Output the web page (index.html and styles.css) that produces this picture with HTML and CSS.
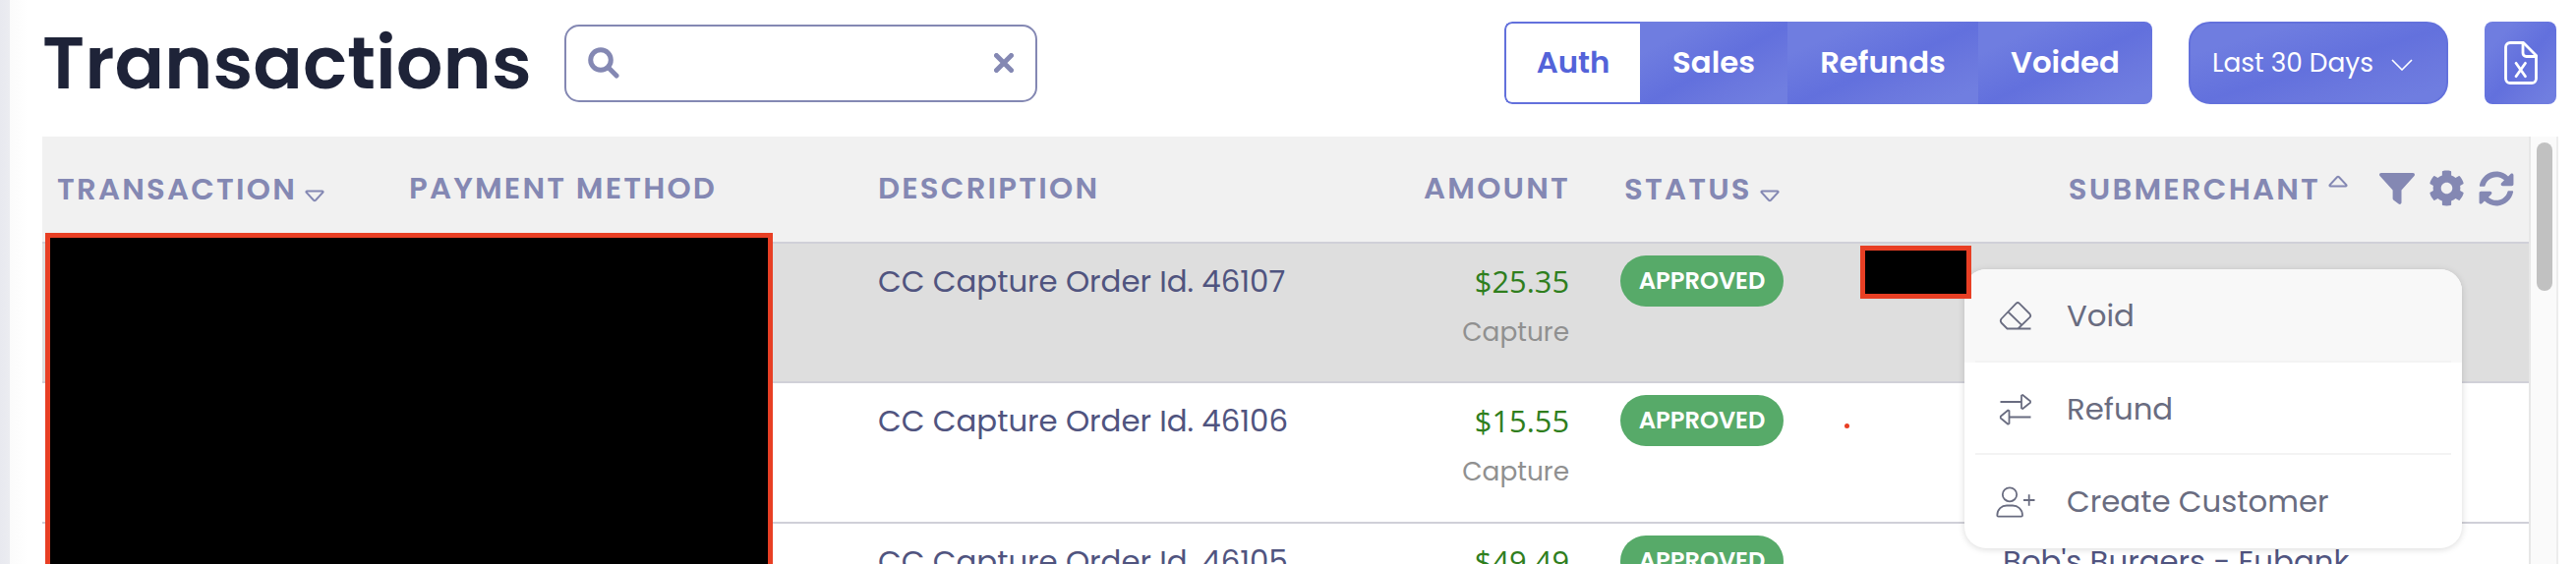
FILE: index.html
```
<!DOCTYPE html>
<html lang="en">
<head>
  <meta charset="UTF-8" />
  <meta name="viewport" content="width=device-width, initial-scale=1.0"/>
  <title>Transactions</title>
  <link rel="stylesheet" href="styles.css">
</head>
<body>

<div class="page">
  <div class="toolbar">
    <h1>Transactions</h1>
    <div class="search">
      <svg class="search-icon" viewBox="0 0 32 32"><circle cx="13" cy="13" r="10.3"/><path d="M20.5 20.5L29 29"/></svg>
      <svg class="clear-icon" viewBox="0 0 20 20"><path d="M2.5 2.5l15 15M17.5 2.5l-15 15"/></svg>
    </div>
    <div class="tabs">
      <button class="tab active">Auth</button>
      <button class="tab sales">Sales</button>
      <button class="tab refunds">Refunds</button>
      <button class="tab voided">Voided</button>
    </div>
    <button class="range-btn">
      <span>Last 30 Days</span>
      <svg viewBox="0 0 22 12"><path d="M1 1l10 10L21 1"/></svg>
    </button>
    <button class="export-btn">
      <svg viewBox="0 0 34 44">
        <path d="M6 1.5h13.5l13 13V38a4.500 4.500 0 0 1-4.500 4.500H6A4.500 4.500 0 0 1 1.500 38V6A4.500 4.500 0 0 1 6 1.500z"/>
        <path d="M19 2v10a3.500 3.500 0 0 0 3.500 3.500h10"/>
        <path d="M12 22.300l9.500 13.400M21.500 22.300L12 35.700"/>
      </svg>
    </button>
  </div>

  <div class="table-wrap">
    <div class="table">
      <div class="row head">
        <div class="cell th sorted">TRANSACTION<svg class="sort down" viewBox="0 0 20 13"><path d="M2.200 1.500h15.600q1.300.3.500 1.500L11 10.800q-1 .9-2 0L1.700 3q-.8-1.200.5-1.500z"/></svg></div>
        <div class="cell th">PAYMENT METHOD</div>
        <div class="cell th desc-col">DESCRIPTION</div>
        <div class="cell th amount-col">AMOUNT</div>
        <div class="cell th sorted status-col">STATUS<svg class="sort down" viewBox="0 0 20 13"><path d="M2.200 1.500h15.600q1.300.3.500 1.500L11 10.800q-1 .9-2 0L1.700 3q-.8-1.200.5-1.500z"/></svg></div>
        <div class="cell th sorted tools">
          SUBMERCHANT
          <svg class="sort up" viewBox="0 0 20 13"><path d="M2.200 11.500h15.600q1.300-.3.500-1.500L11 2.200q-1-.9-2 0L1.700 10q-.8 1.200.5 1.500z"/></svg>
          <svg class="tool filter" viewBox="0 0 36 32"><path d="M1.800 0h32.400c1.600 0 2.300 1.800 1.300 3L22.500 17.500V30c0 1.500-1.500 2.500-2.900 1.500l-5-3.700c-.7-.5-1-1.100-1-1.900v-8.400L.5 3C-.5 1.800.2 0 1.800 0z"/></svg>
          <svg class="tool gear" viewBox="0 0 512 512"><path d="M487.400 315.700l-42.600-24.600c4.300-23.200 4.300-47 0-70.200l42.600-24.600c4.900-2.800 7.100-8.600 5.500-14-11.100-35.600-30-67.800-54.700-94.600-3.800-4.100-10-5.100-14.800-2.300L380.800 110c-17.900-15.400-38.500-27.300-60.800-35.100V25.800c0-5.600-3.900-10.500-9.400-11.700-36.700-8.200-74.300-7.800-109.200 0-5.500 1.200-9.400 6.100-9.400 11.700V75c-22.200 7.900-42.800 19.800-60.800 35.100L88.700 85.500c-4.900-2.800-11-1.900-14.800 2.300-24.700 26.700-43.600 58.900-54.700 94.600-1.700 5.400.6 11.200 5.500 14L67.300 221c-4.300 23.200-4.300 47 0 70.200l-42.600 24.600c-4.900 2.800-7.100 8.600-5.500 14 11.100 35.600 30 67.800 54.700 94.600 3.800 4.100 10 5.100 14.800 2.300l42.600-24.600c17.900 15.400 38.500 27.300 60.800 35.100v49.200c0 5.600 3.900 10.500 9.400 11.700 36.700 8.200 74.300 7.800 109.200 0 5.500-1.200 9.400-6.100 9.400-11.700v-49.200c22.200-7.900 42.800-19.800 60.800-35.100l42.600 24.600c4.900 2.800 11 1.900 14.800-2.300 24.700-26.700 43.600-58.900 54.700-94.600 1.500-5.500-.7-11.300-5.600-14.100zM256 336c-44.100 0-80-35.900-80-80s35.900-80 80-80 80 35.900 80 80-35.900 80-80 80z"/></svg>
          <svg class="tool refresh" viewBox="0 0 512 512"><path d="M370.700 133.300C339.500 104 298.900 88 255.800 88c-77.500.1-144.300 53.200-162.800 126.900-1.300 5.400-6.100 9.200-11.700 9.200H24.100c-7.500 0-13.200-6.800-11.800-14.200C33.900 94.900 134.800 8 256 8c66.400 0 126.800 26.100 171.300 68.700L463 41C478.100 25.900 504 36.600 504 57.900V192c0 13.300-10.700 24-24 24H345.900c-21.400 0-32.100-25.900-17-41l41.800-41.700zM32 296h134.100c21.400 0 32.100 25.900 17 41l-41.800 41.800c31.300 29.300 71.800 45.300 114.900 45.300 77.400-.1 144.300-53.100 162.800-126.800 1.300-5.400 6.100-9.200 11.700-9.200h57.300c7.500 0 13.200 6.800 11.800 14.200C478.100 417.100 377.200 504 256 504c-66.400 0-126.800-26.100-171.300-68.700L49 471c-15.100 15.100-41 4.400-41-16.900V320c0-13.300 10.700-24 24-24z"/></svg>
        </div>
      </div>

      <div class="row selected">
        <div class="cell"></div>
        <div class="cell"></div>
        <div class="cell desc-col desc">CC Capture Order Id. 46107</div>
        <div class="cell amount-col"><div class="amount">$25.35</div><div class="kind">Capture</div></div>
        <div class="cell status-col"><span class="badge">APPROVED</span></div>
        <div class="cell merchant"></div>
      </div>
      <div class="row">
        <div class="cell"></div>
        <div class="cell"></div>
        <div class="cell desc-col desc">CC Capture Order Id. 46106</div>
        <div class="cell amount-col"><div class="amount">$15.55</div><div class="kind">Capture</div></div>
        <div class="cell status-col"><span class="badge">APPROVED</span></div>
        <div class="cell merchant"></div>
      </div>
      <div class="row">
        <div class="cell"></div>
        <div class="cell"></div>
        <div class="cell desc-col desc">CC Capture Order Id. 46105</div>
        <div class="cell amount-col"><div class="amount">$49.49</div></div>
        <div class="cell status-col"><span class="badge">APPROVED</span></div>
        <div class="cell merchant">Bob's Burgers - Eubank</div>
      </div>
    </div>
    <div class="scrollbar"><div class="thumb"></div></div>
  </div>
</div>

<!-- Row menu -->
<div class="menu">
  <div class="menu-item hover">
    <svg viewBox="0 1 40 40"><path d="M11.500 33.500L5.500 27.500q-1.500-2 0-4L20.500 7.800q1.700-1.500 3.400 0L34.500 18.500q1.500 1.700 0 3.400L22.500 33.500M12.500 16.500L26.500 30.200M11 33.500H35.500"/></svg>
    <span>Void</span>
  </div>
  <div class="menu-item">
    <svg viewBox="0 0 40 40"><path d="M4.500 12H26M26 5.500v13l1.200.5L35 12.800v-1.500L27.200 5zM35.500 27.500H13.500M13.500 21v13l-1.200.7L4.800 28.500v-1.800L12.300 20.500z"/></svg>
    <span>Refund</span>
  </div>
  <div class="menu-item">
    <svg viewBox="0 0 40 40"><ellipse cx="14" cy="12.300" rx="7.200" ry="7"/><path d="M1.300 33.500C1.300 27 6 23.500 11 23.500h6c5 0 10 3.500 10 10q0 1.200-1.200 1.200H2.500q-1.200 0-1.200-1.200zM28 18h11.500M33.700 12.200v11.600"/></svg>
    <span>Create Customer</span>
  </div>
</div>

<!-- Redacted areas -->
<div class="redact redact-main"></div>
<div class="redact redact-merchant"></div>
<div class="red-dot"></div>

</body>
</html>
```
FILE: styles.css
```
* {
  box-sizing: border-box;
}

body {
  margin: 0;
  position: relative;
  height: 574px;
  overflow: hidden;
  background: #fff;
  font-family: Poppins, Inter, "Open Sans", sans-serif;
}

button {
  font-family: inherit;
  border: none;
  padding: 0;
  margin: 0;
}

svg {
  display: block;
  flex: none;
}

.page {
  height: 574px;
  padding: 22px 18px 0 43px;
  background: linear-gradient(to right, #e8e9ef 0, #ebecf1 10px, #fbfbfb 10px, #fff 28px);
}

.toolbar {
  display: flex;
  height: 84px;
  align-items: center;
}

h1 {
  width: 531px;
  margin: 0;
  color: #1e2338;
  font-size: 74.8px;
  font-weight: 600;
  line-height: 84px;
  white-space: nowrap;
}

.search {
  width: 481px;
  height: 79px;
  padding: 0 22px;
  display: flex;
  justify-content: space-between;
  align-items: center;
  border: 2px solid #8488b3;
  border-radius: 15px;
}

.search svg {
  fill: none;
  stroke: #8488b3;
  stroke-width: 5;
  stroke-linecap: round;
}

.search-icon {
  width: 32px;
  height: 32px;
}

.clear-icon {
  width: 20px;
  height: 20px;
}

/* Filter tabs */
.tabs {
  display: flex;
  margin-left: auto;
  width: 659px;
  height: 84px;
  border-radius: 8px;
  overflow: hidden;
}

.tab,
.export-btn {
  background: linear-gradient(to bottom right, #6f7de0 0, #6f7de0 20%, #6270dd 52%, #6a77de 70%, #707ee0 90%);
}

.tab {
  width: 150px;
  color: #fff;
  font-size: 30.8px;
  font-weight: 600;
}

.tab.active {
  width: 138px;
  color: #5363d9;
  background: #fff;
  border: 2px solid #6371dc;
  border-right: none;
  border-radius: 8px 0 0 8px;
}

.tab.refunds {
  width: 194px;
}

.tab.voided {
  width: 177px;
}

.range-btn {
  width: 264px;
  height: 84px;
  margin-left: 37px;
  padding-left: 22px;
  display: flex;
  align-items: center;
  gap: 18px;
  color: #fff;
  font-size: 26.4px;
  border: 2px solid #6371dc;
  border-radius: 22px;
  background: linear-gradient(to bottom right, #6f7de0 0, #6f7de0 20%, #6371dd 52%, #6a77de 70%, #6f7de0 90%);
}

.range-btn svg {
  width: 22px;
  height: 12px;
  margin-top: 4px;
  fill: none;
  stroke: #fff;
  stroke-width: 1.6;
}

.export-btn {
  width: 73px;
  height: 84px;
  margin-left: 37px;
  margin-right: 2px;
  display: flex;
  align-items: center;
  justify-content: center;
  border-radius: 8px;
}

.export-btn svg {
  width: 34px;
  height: 44px;
  fill: none;
  stroke: #fff;
  stroke-width: 2.8;
  stroke-linecap: round;
  stroke-linejoin: round;
}

/* Table */
.table-wrap {
  display: flex;
  width: 2559px;
  height: 435px;
  margin-top: 33px;
  overflow: hidden;
}

.table {
  width: 2529px;
}

.row {
  display: grid;
  grid-template-columns: 358px 478px 501px 231px 410px 551px;
  height: 143px;
  border-bottom: 2px solid #d0d0d8;
}

.row.selected {
  height: 142px;
  background: #dedede;
}

.row.head {
  height: 109px;
  background: #f1f1f1;
}

.cell {
  padding: 0 15px;
  white-space: nowrap;
}

.th {
  padding-top: 31px;
  color: #8488b3;
  font-size: 30.8px;
  font-weight: 600;
  line-height: 44px;
  letter-spacing: 2.2px;
}

.th.sorted {
  display: flex;
  padding-top: 32px;
}

.desc-col {
  padding-left: 14px;
}

.amount-col {
  padding-right: 15px;
  text-align: right;
}

.th.amount-col {
  padding-right: 14px;
}

.status-col {
  padding-left: 37px;
}

.th.status-col {
  padding-left: 41px;
}

.sort {
  width: 20px;
  height: 13px;
  margin-left: 8px;
  fill: none;
  stroke: #8488b3;
  stroke-width: 2;
}

.sort.down {
  margin-top: 22px;
}

.sort.up {
  margin-top: 7px;
}

.tools {
  justify-content: flex-end;
}

.tool {
  fill: #8488b3;
}

.filter {
  width: 36px;
  height: 32px;
  margin: 5px 0 0 32px;
}

.gear {
  width: 37px;
  height: 37px;
  margin: 2px 0 0 14px;
}

.refresh {
  width: 36px;
  height: 36px;
  margin: 3px 0 0 14px;
}

.desc,
.merchant {
  padding-top: 17px;
  color: #50547f;
  font-size: 30.8px;
  line-height: 44px;
}

.amount {
  padding-top: 16px;
  color: #2f7e1d;
  font-family: "Open Sans", "Noto Sans", sans-serif;
  font-size: 30.8px;
  line-height: 44px;
}

.kind {
  padding-top: 9px;
  color: #909090;
  font-size: 26.4px;
  line-height: 42px;
}

.badge {
  display: block;
  width: 166px;
  height: 52px;
  margin-top: 12px;
  border-radius: 26px;
  background: #57aa69;
  color: #fff;
  font-size: 24.2px;
  font-weight: 600;
  line-height: 52px;
  text-align: center;
}

.merchant {
  padding-left: 16px;
}

.scrollbar {
  width: 30px;
  padding: 6px 0 0 6px;
  background: #fafafa;
  border-left: 2px solid #e7e7e7;
  border-right: 2px solid #ededed;
}

.thumb {
  width: 16px;
  height: 151px;
  border-radius: 8px;
  background: #c1c1c1;
}

/* Row menu */
.menu {
  position: absolute;
  top: 274px;
  left: 1998px;
  width: 506px;
  height: 284px;
  border-radius: 22px;
  background: #fff;
  overflow: hidden;
  box-shadow: 0 1px 7px rgba(0,0,0,0.15);
}

.menu-item {
  height: 94px;
  padding: 1px 0 0 32px;
  display: flex;
  align-items: center;
  gap: 32px;
  color: #696c80;
  font-size: 30.8px;
  background: linear-gradient(#f3f3f3, #f3f3f3) 11px 100% / 484px 2px no-repeat;
}

.menu-item.hover {
  height: 95px;
  background-color: #f8f8f8;
}

.menu-item:last-child {
  background: none;
}

.menu-item svg {
  width: 40px;
  height: 40px;
  fill: none;
  stroke: #696c80;
  stroke-width: 1.8;
  stroke-linejoin: round;
}

/* Redacted areas */
.redact {
  position: absolute;
  background: #000;
  border: 5px solid #e83f24;
}

.redact-main {
  top: 237px;
  left: 46px;
  width: 740px;
  height: 350px;
}

.redact-merchant {
  top: 250px;
  left: 1892px;
  width: 113px;
  height: 54px;
}

.red-dot {
  position: absolute;
  top: 431px;
  left: 1876px;
  width: 5px;
  height: 5px;
  border-radius: 50%;
  background: #e83f24;
}
```
